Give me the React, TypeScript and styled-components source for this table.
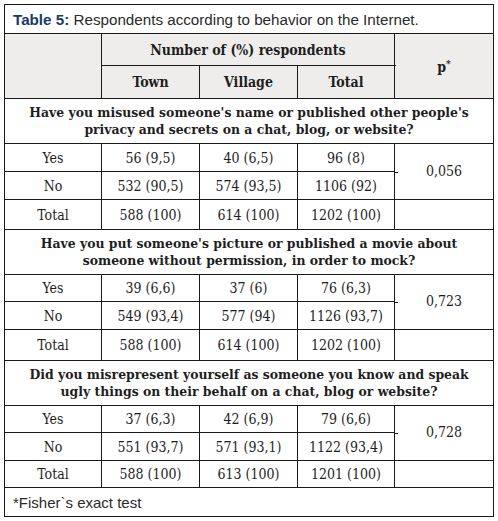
import React from "react";
import styled, { createGlobalStyle } from "styled-components";

const GlobalStyle = createGlobalStyle`
  html, body { margin: 0; padding: 0; background: #ffffff; }
  #root { padding: 4px; }
`;

const Table = styled.table`
  border-collapse: collapse;
  table-layout: fixed;
  width: 489px;
  font-family: "DejaVu Serif Condensed", "DejaVu Serif", serif;
  font-size: 14px;
  color: #1e1e1e;
  td, th { border: 1px solid #1a1a1a; padding: 0; }
`;

const TitleCell = styled.td`
  height: 28px;
  padding: 0 0 0 8px !important;
  text-align: left;
  font-family: "Liberation Sans", Arial, sans-serif;
  font-size: 15.2px;
  color: #2a2a2a;
  background: #ffffff;
`;

const TitleLabel = styled.b`
  color: #1c3a63;
`;

const HeadCell = styled.th<{ $h: number }>`
  height: ${(p) => p.$h - 1}px;
  background: #efedeb;
  font-weight: 700;
  text-align: center;
  vertical-align: middle;
  color: #1e1e1e;
`;

const PHead = styled(HeadCell)`
  position: relative;
  &::before {
    content: "";
    position: absolute;
    left: -1px;
    top: 31px;
    width: 2px;
    height: 1px;
    background: #1a1a1a;
  }
  sup { font-size: 10px; vertical-align: 5px; }
`;

const QuestionCell = styled.td`
  height: 44px;
  font-weight: 700;
  font-size: 13.8px;
  line-height: 17px;
  text-align: center;
  vertical-align: middle;
`;

const Cell = styled.td<{ $h: number }>`
  height: ${(p) => p.$h - 1}px;
  text-align: center;
  vertical-align: middle;
`;

const PCell = styled.td`
  position: relative;
  text-align: center;
  vertical-align: middle;
  padding-bottom: 2px !important;
  &::before {
    content: "";
    position: absolute;
    left: -1px;
    top: 50%;
    width: 4px;
    height: 1px;
    background: #1a1a1a;
  }
`;

const FootCell = styled.td`
  height: 28px;
  padding: 0 0 0 8px !important;
  font-family: "Liberation Sans", Arial, sans-serif;
  font-size: 15px;
  color: #2a2a2a;
  text-align: left;
`;

type Block = {
  q: [string, string];
  rows: [string, string, string, string][];
  p: string;
  heights: number[];
};

const blocks: Block[] = [
  {
    q: [
      "Have you misused someone's name or published other people's",
      "privacy and secrets on a chat, blog, or website?",
    ],
    rows: [
      ["Yes", "56 (9,5)", "40 (6,5)", "96 (8)"],
      ["No", "532 (90,5)", "574 (93,5)", "1106 (92)"],
      ["Total", "588 (100)", "614 (100)", "1202 (100)"],
    ],
    p: "0,056",
    heights: [28, 28, 30],
  },
  {
    q: [
      "Have you put someone's picture or published a movie about",
      "someone without permission, in order to mock?",
    ],
    rows: [
      ["Yes", "39 (6,6)", "37 (6)", "76 (6,3)"],
      ["No", "549 (93,4)", "577 (94)", "1126 (93,7)"],
      ["Total", "588 (100)", "614 (100)", "1202 (100)"],
    ],
    p: "0,723",
    heights: [27, 28, 31],
  },
  {
    q: [
      "Did you misrepresent yourself as someone you know and speak",
      "ugly things on their behalf on a chat, blog or website?",
    ],
    rows: [
      ["Yes", "37 (6,3)", "42 (6,9)", "79 (6,6)"],
      ["No", "551 (93,7)", "571 (93,1)", "1122 (93,4)"],
      ["Total", "588 (100)", "613 (100)", "1201 (100)"],
    ],
    p: "0,728",
    heights: [27, 28, 27],
  },
];

export default function App() {
  return (
    <>
      <GlobalStyle />
      <Table>
        <colgroup>
          <col style={{ width: 97 }} />
          <col style={{ width: 98 }} />
          <col style={{ width: 98 }} />
          <col style={{ width: 97 }} />
          <col style={{ width: 99 }} />
        </colgroup>
        <tbody>
          <tr>
            <TitleCell colSpan={5}>
              <TitleLabel>Table 5:</TitleLabel> Respondents according to behavior on the Internet.
            </TitleCell>
          </tr>
          <tr>
            <HeadCell $h={32} rowSpan={2} />
            <HeadCell $h={32} colSpan={3}>Number of (%) respondents</HeadCell>
            <PHead $h={32} rowSpan={2}>
              p<sup>*</sup>
            </PHead>
          </tr>
          <tr>
            <HeadCell $h={33}>Town</HeadCell>
            <HeadCell $h={33}>Village</HeadCell>
            <HeadCell $h={33}>Total</HeadCell>
          </tr>
          {blocks.map((b, bi) => (
            <React.Fragment key={bi}>
              <tr>
                <QuestionCell colSpan={5}>
                  {b.q[0]}
                  <br />
                  {b.q[1]}
                </QuestionCell>
              </tr>
              {b.rows.map((r, ri) => (
                <tr key={ri}>
                  {r.map((c, ci) => (
                    <Cell key={ci} $h={b.heights[ri]}>
                      {c}
                    </Cell>
                  ))}
                  {ri === 0 && <PCell rowSpan={2}>{b.p}</PCell>}
                  {ri === 2 && <Cell $h={b.heights[ri]} />}
                </tr>
              ))}
            </React.Fragment>
          ))}
          <tr>
            <FootCell colSpan={5}>*Fisher`s exact test</FootCell>
          </tr>
        </tbody>
      </Table>
    </>
  );
}
